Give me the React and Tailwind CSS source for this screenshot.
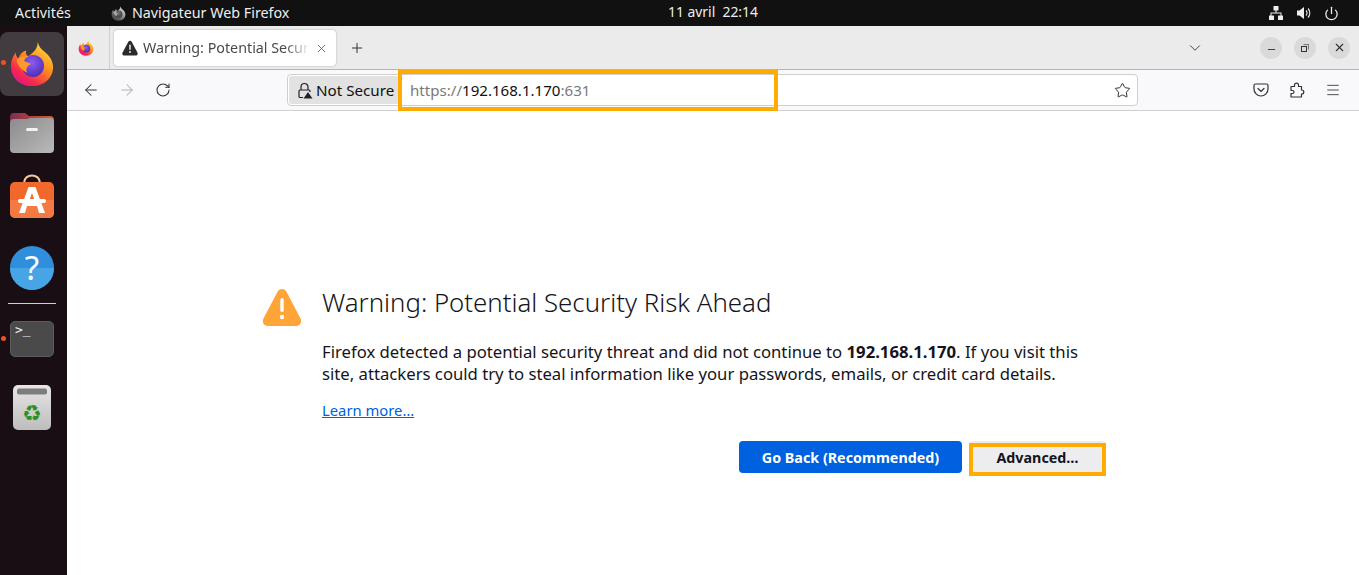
import React from 'react';
import { ArrowLeft, ArrowRight, RotateCw, Star, ChevronDown, Menu, X, Plus, Minus, Power } from 'lucide-react';

const Firefox = ({ size }) => (
  <svg width={size} height={size} viewBox="0 0 48 48">
    <defs>
      <linearGradient id="ffOuter" x1="0.8" y1="0.1" x2="0.2" y2="0.95">
        <stop offset="0" stopColor="#ffd43a" />
        <stop offset="0.4" stopColor="#ff8a1f" />
        <stop offset="0.8" stopColor="#f5274f" />
        <stop offset="1" stopColor="#e31587" />
      </linearGradient>
      <radialGradient id="ffGlobe" cx="0.45" cy="0.35" r="0.7">
        <stop offset="0" stopColor="#8f5cf0" />
        <stop offset="1" stopColor="#4a2bb5" />
      </radialGradient>
    </defs>
    <path d="M30 1c1 5 4 8 8 11 5 4 8 10 8 15 0 11-9 20-22 20C11 47 2 38 2 26c0-5 2-10 5-14 0 3 1 5 3 6 1-4 4-7 8-8-1 3 0 5 2 6 4-3 10-7 10-15z" fill="url(#ffOuter)" />
    <circle cx="25" cy="26" r="11.5" fill="url(#ffGlobe)" />
    <path d="M8 20c3-4 8-5 13-4-3 1-5 3-5 5 3 1 6 2 7 3-4 2-6 5-4 9-5-2-10-7-11-13z" fill="#ff9a2a" />
  </svg>
);

const Warning = ({ size, color }) => (
  <svg width={size} height={size} viewBox="0 0 40 40">
    <path d="M20 2c2 0 3.500 1 4.500 2.800l14 26.700c1.800 3.400-.3 7.500-4.200 7.500H5.700c-3.900 0-6-4.100-4.200-7.500l14-26.700C16.500 3 18 2 20 2z" fill={color} />
    <rect x="18.300" y="11" width="3.400" height="14" rx="1.700" fill="#fff" />
    <circle cx="20" cy="30" r="2.200" fill="#fff" />
  </svg>
);

const Network = () => (
  <svg width="16" height="16" viewBox="0 0 16 16" fill="#eee">
    <rect x="5.500" y="1" width="5" height="4.500" rx="0.500" />
    <rect x="1" y="10.500" width="5" height="4.500" rx="0.500" />
    <rect x="10" y="10.500" width="5" height="4.500" rx="0.500" />
    <path d="M7.500 5h1v2.500h5V11h-1V8.500h-9V11h-1V7.500h5z" />
  </svg>
);

const Speaker = () => (
  <svg width="16" height="16" viewBox="0 0 16 16" fill="none">
    <path d="M1 5.500h2.500L8 2v12l-4.500-3.500H1z" fill="#eee" />
    <path d="M10 5.500a3.500 3.500 0 0 1 0 5" stroke="#eee" strokeWidth="1.100" />
    <path d="M12 3.500a6.500 6.500 0 0 1 0 9" stroke="#eee" strokeWidth="1.100" />
  </svg>
);

const LockWarn = () => (
  <svg width="17" height="17" viewBox="0 0 17 17" fill="none">
    <path d="M5 8V5a3.500 3.500 0 0 1 7 0v3" stroke="#222" strokeWidth="1.200" />
    <path d="M7 15.500H4a1 1 0 0 1-1-1V9a1 1 0 0 1 1-1h9a1 1 0 0 1 1 1v1" stroke="#222" strokeWidth="1.200" />
    <path d="M12 10l4.500 6.500h-9z" fill="#222" />
  </svg>
);

const Pocket = () => (
  <svg width="16" height="16" viewBox="0 0 16 16" fill="none" stroke="#333" strokeWidth="1.200">
    <path d="M2.500 2h11A1.500 1.500 0 0 1 15 3.500V7a7 7 0 0 1-14 0V3.500A1.500 1.500 0 0 1 2.500 2z" />
    <path d="M5 6.500l3 3 3-3" strokeLinecap="round" />
  </svg>
);

const PuzzlePiece = () => (
  <svg width="16" height="16" viewBox="0 0 16 16" fill="none" stroke="#333" strokeWidth="1.200" strokeLinejoin="round">
    <path d="M2 4.500h3.500V3.200a2 2 0 0 1 4 0v1.300h3V8h.3a2 2 0 0 1 0 4h-.3v3H2v-3.500h1.500a1.500 1.500 0 0 0 0-3H2z" />
  </svg>
);

const Restore = () => (
  <svg width="10" height="10" viewBox="0 0 10 10" fill="none" stroke="#333">
    <rect x="1.500" y="3.500" width="5" height="5" />
    <path d="M3.500 1.500h5v5" strokeOpacity="0.6" />
  </svg>
);

const FilesIcon = () => (
  <svg width="44" height="42" viewBox="0 0 44 42">
    <defs>
      <linearGradient id="folderTab" x1="0" y1="0" x2="1" y2="0">
        <stop offset="0" stopColor="#7d2d55" />
        <stop offset="1" stopColor="#e3582b" />
      </linearGradient>
      <linearGradient id="folderBody" x1="0" y1="0" x2="1" y2="1">
        <stop offset="0" stopColor="#8c8c8c" />
        <stop offset="1" stopColor="#b9b9b9" />
      </linearGradient>
    </defs>
    <path d="M0 6a4 4 0 0 1 4-4h11l4 3h21a4 4 0 0 1 4 4v10H0z" fill="url(#folderTab)" />
    <path d="M0 12a4 4 0 0 1 4-4h13l3-1h20a4 4 0 0 1 4 4v27a4 4 0 0 1-4 4H4a4 4 0 0 1-4-4z" fill="url(#folderBody)" />
    <rect x="16" y="17" width="12" height="3" rx="1.500" fill="#f2f2f2" />
  </svg>
);

const StoreIcon = () => (
  <svg width="44" height="46" viewBox="0 0 44 46">
    <path d="M14 10c0-10 16-10 16 0" fill="none" stroke="#f3c9a0" strokeWidth="2" />
    <rect y="9" width="44" height="36" rx="5" fill="#f0682c" />
    <path d="M0 27h44v13a5 5 0 0 1-5 5H5a5 5 0 0 1-5-5z" fill="#f47a41" />
    <path d="M18.500 14h7l9.500 26h-6l-2-7H17l-2 7H9z" fill="#fff" />
    <path d="M22 20l-3 9h6z" fill="#f0682c" />
    <rect x="8" y="26" width="28" height="4" rx="2" fill="#fff" />
  </svg>
);

const HelpIcon = () => (
  <svg width="44" height="44" viewBox="0 0 44 44">
    <circle cx="22" cy="22" r="22" fill="#2f8fdc" />
    <path d="M0 22h44a22 22 0 0 1-44 0z" fill="#47a5e6" />
    <text x="22" y="34" textAnchor="middle" fontSize="33" fill="#fff" fontFamily="Noto Sans, sans-serif">?</text>
  </svg>
);

const TrashIcon = () => (
  <svg width="38" height="45" viewBox="0 0 38 45">
    <defs>
      <linearGradient id="bin" x1="0" y1="0" x2="0" y2="1">
        <stop offset="0" stopColor="#e6e6e6" />
        <stop offset="1" stopColor="#bdbdbd" />
      </linearGradient>
    </defs>
    <rect width="38" height="45" rx="5" fill="url(#bin)" />
    <rect x="4" y="3.500" width="30" height="6" rx="2" fill="#7d7d7d" />
    <text x="19" y="36" textAnchor="middle" fontSize="22" fill="#2a9125" fontFamily="DejaVu Sans, sans-serif">♻</text>
  </svg>
);

const RoundButton = ({ children }) => (
  <div className="w-[22px] h-[22px] rounded-full bg-[#dadada] flex items-center justify-center">{children}</div>
);

const App = () => {
  return (
    <div className="w-[1359px] h-[575px] flex flex-col overflow-hidden bg-white font-['Noto_Sans',sans-serif]">
      {/* gnome top bar */}
      <div className="h-[26px] shrink-0 bg-[#111111] text-[#eeeeee] text-[14.300px] flex items-center pl-[15px] pr-[20px] relative">
        <span>Activités</span>
        <div className="ml-[40px] flex items-center gap-[6px]">
          <div className="grayscale"><Firefox size={15} /></div>
          <span>Navigateur Web Firefox</span>
        </div>
        <span className="absolute left-[668px] top-[2px] text-[13.900px]">11 avril&nbsp;&nbsp;22:14</span>
        <div className="ml-auto flex items-center gap-[12px]">
          <Network />
          <Speaker />
          <Power size={15} color="#eee" />
        </div>
      </div>

      <div className="flex flex-1 min-h-0">
        {/* dock */}
        <div className="w-[67px] shrink-0 bg-[#1a0e15] flex flex-col items-center pr-[3px] relative">
          <div className="mt-[6px] w-[64px] h-[64px] self-start rounded-[8px] bg-[#423c40] flex items-center justify-center">
            <Firefox size={46} />
          </div>
          <span className="absolute left-[1px] top-[34px] w-[5px] h-[5px] rounded-full bg-[#e95420]" />
          <div className="mt-[15px]"><FilesIcon /></div>
          <div className="mt-[20px]"><StoreIcon /></div>
          <div className="mt-[27px]"><HelpIcon /></div>
          <div className="mt-[13px] w-[48px] h-px bg-[#cfcfcf]" />
          <div className="mt-[17px] w-[44px] h-[36px] rounded-[5px] bg-[#4a4a4a] border border-[#5c5c5c] text-[#eeeeee] text-[13px] leading-none pl-[4px] pt-[1px] font-['DejaVu_Sans_Mono',monospace]">&gt;_</div>
          <span className="absolute left-[1px] top-[310px] w-[5px] h-[5px] rounded-full bg-[#e95420]" />
          <div className="mt-[28px]"><TrashIcon /></div>
        </div>

        {/* firefox window */}
        <div className="flex-1 min-w-0 flex flex-col relative">
          <div className="h-[44px] shrink-0 bg-[#ebebeb] border-b border-[#b5b5b5] flex items-center">
            <div className="w-[43px] h-full border-r border-[#cfcfcf] flex items-center justify-center pr-[4px]">
              <Firefox size={16} />
            </div>
            <div className="ml-[4px] w-[222px] h-[36px] mt-[1px] bg-white rounded-[4px] shadow-[0_0_2px_rgba(0,0,0,0.3)] flex items-center pl-[8px] pr-[8px] gap-[5px]">
              <Warning size={16} color="#2b2b2b" />
              <span className="flex-1 min-w-0 overflow-hidden whitespace-nowrap text-[14.300px] text-[#4a4a4a] [mask-image:linear-gradient(to_right,black_85%,transparent)]">Warning: Potential Security Risk Ahead</span>
              <X size={13} color="#555" strokeWidth={1.500} />
            </div>
            <div className="ml-[13px]"><Plus size={16} color="#333" strokeWidth={1.500} /></div>
            <div className="ml-auto flex items-center pr-[9px]">
              <ChevronDown size={18} color="#444" strokeWidth={1.300} />
              <div className="ml-[56px]"><RoundButton><Minus size={11} color="#333" className="mt-[4px]" /></RoundButton></div>
              <div className="ml-[12px]"><RoundButton><Restore /></RoundButton></div>
              <div className="ml-[12px]"><RoundButton><X size={13} color="#333" /></RoundButton></div>
            </div>
          </div>

          <div className="h-[41px] shrink-0 bg-[#f9f9fb] border-b border-[#d0d0d0] flex items-center">
            <div className="ml-[15px] flex items-center gap-[18px]">
              <ArrowLeft size={18} color="#333" strokeWidth={1.400} />
              <ArrowRight size={18} color="#b0b0b0" strokeWidth={1.400} />
              <RotateCw size={16} color="#333" strokeWidth={1.600} className="ml-[1px]" />
            </div>
            <div className="ml-[116px] w-[851px] h-[32px] bg-white border border-[#cfcfcf] rounded-[4px] flex items-center pl-[1px]">
              <div className="h-[28px] w-[110px] bg-[#e2e2e2] rounded-[3px] flex items-center pl-[7px] gap-[3px] text-[15.200px] text-[#111] whitespace-nowrap">
                <LockWarn />
                <span>Not Secure</span>
              </div>
              <span className="ml-[11px] text-[15.100px] text-[#7a7a7a] whitespace-nowrap">https://<span className="text-[#111]">192.168.1.170</span>:631</span>
              <Star size={17} color="#222" strokeWidth={1.300} className="ml-auto mr-[6px]" />
            </div>
            <div className="ml-auto flex items-center gap-[20px] pr-[18px]">
              <Pocket />
              <PuzzlePiece />
              <Menu size={16} color="#333" strokeWidth={1.300} />
            </div>
          </div>

          {/* error page */}
          <div className="flex-1 bg-white pl-[195px] pt-[176px] flex items-start">
            <Warning size={40} color="#ffa436" />
            <div className="ml-[20px] w-[784px] text-[#15141a]">
              <h1 className="text-[25.800px] leading-[30px] font-light">Warning: Potential Security Risk Ahead</h1>
              <p className="mt-[24px] text-[16.700px] leading-[22px] w-[770px]">
                Firefox detected a potential security threat and did not continue to <b>192.168.1.170</b>. If you visit this site, attackers could try to steal information like your passwords, emails, or credit card details.
              </p>
              <a className="mt-[14px] block text-[14.800px] text-[#0060df] underline">Learn more…</a>
              <div className="mt-[20px] flex justify-end gap-[7px]">
                <button className="h-[32px] w-[223px] pt-[1px] rounded-[4px] bg-[#0061e0] text-white text-[14.300px] font-bold">Go Back (Recommended)</button>
                <button className="h-[32px] w-[137px] pt-[1px] rounded-[4px] bg-[#ededf0] text-[#15141a] text-[14.300px] font-bold">Advanced…</button>
              </div>
            </div>
          </div>

          {/* orange annotation boxes */}
          <div className="absolute left-[331px] top-[44px] w-[380px] h-[41px] border-[4px] border-[#ffab00]" />
          <div className="absolute left-[902px] top-[417px] w-[137px] h-[33px] border-[4px] border-[#ffab00]" />
        </div>
      </div>
    </div>
  );
};

export default App;
